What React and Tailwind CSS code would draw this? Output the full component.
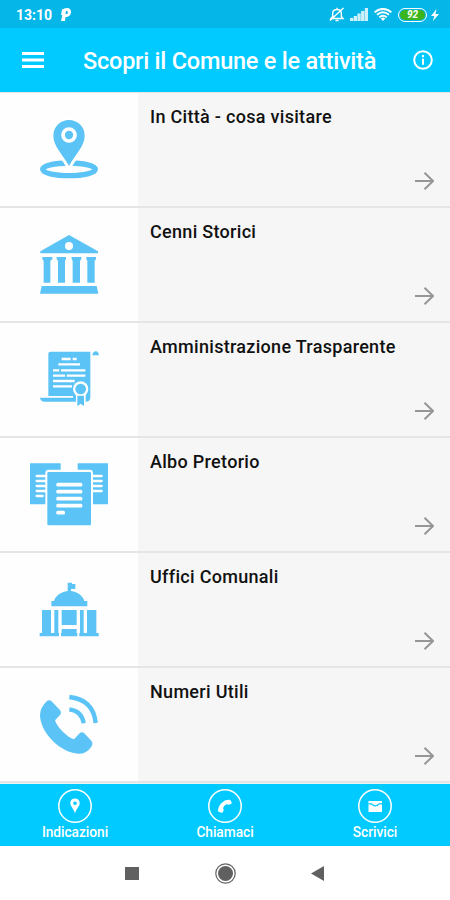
const Icon = ({ children }) => (
    <svg className="w-[120px] h-[90px] text-[#5bc3f5]" viewBox="0 0 360 270" fill="currentColor">
        {children}
    </svg>
);

const PinIcon = () => (
    <Icon>
        <ellipse cx="147" cy="193" rx="79" ry="19" fill="none" stroke="currentColor" strokeWidth="16" />
        <path d="M147 183C130 150 100 124 100 92a47 47 0 0 1 94 0c0 32-30 58-47 91z" stroke="white" strokeWidth="18" fill="white" />
        <path d="M147 183C130 150 100 124 100 92a47 47 0 0 1 94 0c0 32-30 58-47 91z" />
        <circle cx="147" cy="90" r="18" fill="none" stroke="white" strokeWidth="11" />
    </Icon>
);

const MuseumIcon = () => (
    <Icon>
        <path d="M147 45L234 94v6H61v-6z" />
        <circle cx="147" cy="78" r="12" fill="white" />
        <path d="M67 111h30v7l-6 4v66H71v-66l-4-4zM110 111h28v7l-3 4v66h-21v-66l-4-4zM155 111h29v7l-4 4v66h-22v-66l-3-4zM199 111h29v7l-4 4v66h-22v-66l-3-4z" />
        <path d="M65 198h165l5 23H60z" />
    </Icon>
);

const CertificateIcon = () => (
    <Icon>
        <path d="M91 50h120v136q0 14-12 14h-40v-17H85V56q0-6 6-6zM217 61q2-12 11-12 7 1 9 12zM60 188h105v12H74q-12 0-14-12z" />
        <g stroke="white" strokeWidth="7">
            <path d="M125 72h27m6 0h12M115 88h65M99 106h19m5 0h73M99 122h36m5 0h56M99 138h65M99 154h57" />
        </g>
        <circle cx="182" cy="162" r="23" fill="white" />
        <path d="M168 176h29v42h-29z" fill="white" />
        <circle cx="182" cy="162" r="16" />
        <path d="M172 182h20v32l-10-8-10 8z" />
    </Icon>
);

const DocumentsIcon = () => (
    <Icon>
        <path d="M30 40h92v123H30zM173 40h91v123h-91z" />
        <path d="M50 78h35M50 93h35M50 108h35M50 123h35M50 138h18M210 78h35M210 93h35M210 108h35M210 123h35" stroke="white" strokeWidth="7" strokeLinecap="round" />
        <rect x="76" y="59" width="143" height="173" rx="10" fill="white" />
        <rect x="82" y="66" width="131" height="160" rx="3" />
        <path d="M114 104h68M114 125h68M114 146h68M114 167h68M114 188h16" stroke="white" strokeWidth="11" strokeLinecap="round" />
    </Icon>
);

const TownHallIcon = () => (
    <Icon>
        <path d="M143 53h13v4h10v15h-13v6c21 3 36 15 40 30h9v16H94v-16h8c5-16 20-27 41-30z" />
        <path d="M66 135h27v70H66zM103 135h12v70h-12zM125 135h45v45h-45zM125 192h45v13h-45zM180 135h11v70h-11zM201 135h28v70h-28z" />
        <path d="M59 204h58v10H59zM123 204h49v10h-49zM178 204h58v10h-58z" />
    </Icon>
);

const CallIcon = () => (
    <Icon>
        <path d="M81 63q8-5 15 2l23 24q7 8 1 16l-15 16c6 20 36 51 57 57l14-15q8-10 17-3l22 24q5 7-1 16-14 20-34 21C123 221 60 158 60 104q1-22 21-41z" />
        <path d="M148 51q72 8 79 78M148 88q38 5 43 42" fill="none" stroke="currentColor" strokeWidth="13" />
    </Icon>
);

const items = [
    { title: 'In Città - cosa visitare', icon: PinIcon },
    { title: 'Cenni Storici', icon: MuseumIcon },
    { title: 'Amministrazione Trasparente', icon: CertificateIcon },
    { title: 'Albo Pretorio', icon: DocumentsIcon },
    { title: 'Uffici Comunali', icon: TownHallIcon },
    { title: 'Numeri Utili', icon: CallIcon },
];

const StatusBar = () => (
    <div className="h-7 shrink-0 bg-[#05b7e8] flex items-center text-white pl-4 pr-[11px] pt-px">
        <span className="text-[14px] font-bold leading-none w-[37px]">13:10</span>
        <svg className="ml-2 w-[10px] h-[13px]" viewBox="0 0 10 13">
            <path fillRule="evenodd" fill="white" d="M1 1.500Q3 0 6 0q4 0 4 4t-4 5H4.500l-.5 4H0l1.300-6H0zM5 3L4.500 6Q7 6.500 7 4.500T5 3z" />
        </svg>
        <svg className="ml-auto w-4 h-[15px]" viewBox="0 0 16 15" fill="none" stroke="white" strokeWidth="1.400">
            <path d="M2 11.500h12l-1.700-2V6Q12 2.500 8 2.500T3.700 6v3.500zM6.500 13.500h3M8 .8v1.500M1 13.500L14.500 1" />
        </svg>
        <svg className="ml-[5px] w-[18px] h-[13px]" viewBox="0 0 18 13" fill="white">
            <path d="M0 10h3.300v3H0zM3.700 8H7v5H3.700zM7.400 5.500h3.300V13H7.400zM11.100 3h3.300v10h-3.300zM14.800 0h3.200v13h-3.200z" opacity=".8" />
        </svg>
        <svg className="ml-[6px] w-[18px] h-[13px]" viewBox="0 0 18 13" fill="none" stroke="white" strokeWidth="1.900">
            <path d="M.6 4.200Q9-2.400 17.400 4.200M3 6.800Q9 1.800 15 6.800M5.300 9.300Q9 6.200 12.700 9.300" />
            <path d="M6.700 10.600Q9 8.600 11.300 10.600L9 13z" fill="white" stroke="none" />
        </svg>
        <span className="ml-[6px] w-[29px] h-[14px] rounded-full border-[1.5px] border-white p-px flex">
            <span className="flex-1 rounded-full bg-[#3bb51b] text-[10px] italic font-bold leading-[10px] text-center">92</span>
        </span>
        <svg className="ml-1 w-[8px] h-[12px]" viewBox="0 0 8 12" fill="white">
            <path d="M5.500 0L0 7h3.200L2 12l6-7H4.500z" />
        </svg>
    </div>
);

const Header = () => (
    <header className="h-16 shrink-0 bg-[#00caff] flex items-center text-white pl-[22px] pr-[17px]">
        <button aria-label="Menu">
            <svg className="w-[22px] h-[18px]" viewBox="0 0 22 18" fill="white">
                <path d="M0 1h22v3H0zM0 7.500h22v3H0zM0 14h22v3H0z" />
            </svg>
        </button>
        <h1 className="ml-[39px] mt-[3px] text-[23.5px] font-medium leading-none whitespace-nowrap tracking-[-0.23px]">Scopri il Comune e le attività</h1>
        <button className="ml-auto" aria-label="Info">
            <svg className="w-5 h-5" viewBox="0 0 20 20" fill="none" stroke="white" strokeWidth="2">
                <circle cx="10" cy="10" r="8.800" />
                <path d="M10 5v2.200M10 8.800v6" />
            </svg>
        </button>
    </header>
);

const MenuRow = ({ item }) => {
    const RowIcon = item.icon;

    return (
        <li className="h-[115px] flex border-b-2 border-[#e5e5e5]">
            <div className="w-[138px] shrink-0 bg-[#fefefe] pl-5 pt-3">
                <RowIcon />
            </div>
            <div className="flex-1 bg-[#f6f6f6] pl-3 pr-4 pt-[14px] pb-4 flex flex-col justify-between">
                <h2 className="text-[18px] font-medium leading-5 text-[#111] whitespace-nowrap tracking-[0.3px]">{item.title}</h2>
                <svg className="self-end w-[19px] h-[18px]" viewBox="0 0 19 18" fill="none" stroke="#969696" strokeWidth="2">
                    <path d="M0 9h18M9.500.8L18 9l-8.500 8.200" />
                </svg>
            </div>
        </li>
    );
};

const actions = [
    {
        label: 'Indicazioni',
        icon: (
            <path fillRule="evenodd" d="M17 9.500c-3 0-4.700 2-4.700 4.700 0 3 3.500 5.300 4.700 10.300 1.200-5 4.700-7.300 4.700-10.300 0-2.700-1.700-4.700-4.700-4.700zm0 3a1.800 1.800 0 1 1 0 3.600 1.800 1.800 0 0 1 0-3.600z" />
        ),
    },
    {
        label: 'Chiamaci',
        icon: (
            <path d="M10.500 22.700l3 1q1 .2 1.500-.8l.7-2.200q.2-.7-.8-1.400 1-2.800 3.900-4.200.8 1 1.500.7l2.600-.9q1-.5.8-1.500l-1-2q-.4-.7-1.300-.7-4.400-.4-7.800 3.200-3.600 3.600-3.600 7.800 0 .8.500 1z" />
        ),
    },
    {
        label: 'Scrivici',
        icon: (
            <>
                <path d="M10.500 12h13.500v11H10.500z" />
                <path d="M10.500 14.800h3q3.700 4 7.500 0h3" fill="none" stroke="#00caff" strokeWidth="1.200" />
            </>
        ),
    },
];

const BottomBar = () => (
    <nav className="h-[62px] shrink-0 bg-[#00caff] grid grid-cols-3 text-white">
        {actions.map((action) => (
            <button key={action.label} className="flex flex-col items-center pt-[5px]">
                <svg className="w-[34px] h-[34px]" viewBox="0 0 34 34" fill="white">
                    <circle cx="17" cy="17" r="16.200" fill="none" stroke="white" strokeWidth="1.500" />
                    {action.icon}
                </svg>
                <span className="mt-px text-[13.75px] font-medium leading-4 tracking-[-0.05px]">{action.label}</span>
            </button>
        ))}
    </nav>
);

const SystemNav = () => (
    <div className="flex-1 bg-white flex items-center pl-[125px]">
        <span className="w-[14px] h-[13px] bg-[#606060]" />
        <svg className="ml-[76px] w-[21px] h-[21px]" viewBox="0 0 21 21" fill="#606060">
            <circle cx="10.500" cy="10.500" r="9.700" fill="none" stroke="#606060" strokeWidth="1.200" />
            <circle cx="10.500" cy="10.500" r="7.500" />
        </svg>
        <svg className="ml-[75px] w-[13px] h-[15px]" viewBox="0 0 13 15" fill="#606060">
            <path d="M13 0v15L0 7.500z" />
        </svg>
    </div>
);

export default function App() {
    return (
        <div className="w-[450px] h-[900px] flex flex-col overflow-hidden bg-white font-[Roboto,sans-serif]">
            <StatusBar />
            <Header />
            <ul className="h-[692px] shrink-0 bg-[#e8f3f5] border-t border-[#e5e5e5]">
                {items.map((item) => (
                    <MenuRow key={item.title} item={item} />
                ))}
            </ul>
            <BottomBar />
            <SystemNav />
        </div>
    );
}
